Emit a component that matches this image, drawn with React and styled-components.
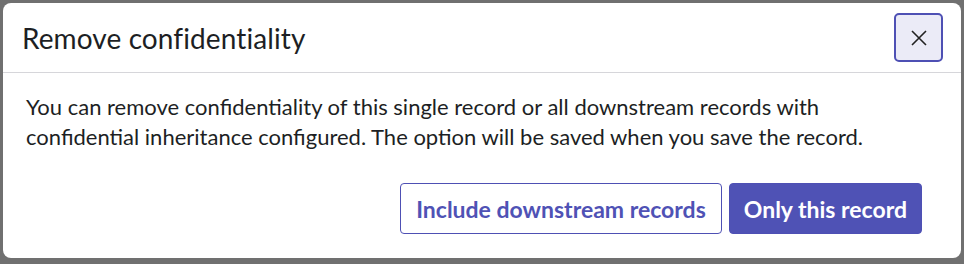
import React from "react";
import styled, { createGlobalStyle } from "styled-components";

const GlobalStyle = createGlobalStyle`
  html, body {
    margin: 0;
    padding: 0;
    background: #707070;
    font-family: Lato, "Noto Sans", sans-serif;
  }
  * { box-sizing: border-box; }
`;

const Backdrop = styled.div`
  width: 964px;
  height: 264px;
  padding: 3px 3px 6px 3px;
  background: #707070;
`;

const Dialog = styled.div`
  width: 958px;
  height: 255px;
  background: #fff;
  border-radius: 8px;
  display: flex;
  flex-direction: column;
  overflow: hidden;
`;

const Header = styled.div`
  height: 70px;
  display: flex;
  align-items: center;
  justify-content: space-between;
  padding: 0 18px 0 19px;
  border-bottom: 1px solid #d6d6da;
`;

const Title = styled.h2`
  margin: 0;
  font-size: 28px;
  font-weight: 400;
  color: #1d1f24;
  letter-spacing: 0.1px;
`;

const CloseButton = styled.button`
  width: 49px;
  height: 49px;
  display: flex;
  align-items: center;
  justify-content: center;
  background: #ebebf7;
  border: 2px solid #4e50b4;
  border-radius: 5px;
  padding: 0;
  color: #222;
  cursor: pointer;
`;

const Body = styled.div`
  padding: 19px 23px 0 23px;
  font-size: 22px;
  line-height: 30px;
  color: #1d1f24;
`;

const Text = styled.p`
  margin: 0;
  max-width: 860px;
`;

const Actions = styled.div`
  display: flex;
  justify-content: flex-end;
  gap: 7px;
  padding: 31px 39px 0 0;
`;

const Button = styled.button`
  height: 51px;
  padding: 0 ${(p) => (p.$primary ? "14px" : "15px")};
  font-family: Lato, "Noto Sans", sans-serif;
  font-size: 23px;
  font-weight: 700;
  border-radius: 4px;
  border: 1px solid #4e50b4;
  background: ${(p) => (p.$primary ? "#4f52b5" : "#fff")};
  color: ${(p) => (p.$primary ? "#fff" : "#4f52b5")};
  cursor: pointer;
`;

export default function App() {
  return (
    <>
      <GlobalStyle />
      <Backdrop>
        <Dialog>
          <Header>
            <Title>Remove confidentiality</Title>
            <CloseButton aria-label="Close">
              <svg width="18" height="18" viewBox="0 0 18 18" fill="none">
                <path d="M2 2L16 16M16 2L2 16" stroke="#222" strokeWidth="1.6" />
              </svg>
            </CloseButton>
          </Header>
          <Body>
            <Text>
              You can remove confidentiality of this single record or all downstream records with
              confidential inheritance configured. The option will be saved when you save the record.
            </Text>
          </Body>
          <Actions>
            <Button>Include downstream records</Button>
            <Button $primary>Only this record</Button>
          </Actions>
        </Dialog>
      </Backdrop>
    </>
  );
}
